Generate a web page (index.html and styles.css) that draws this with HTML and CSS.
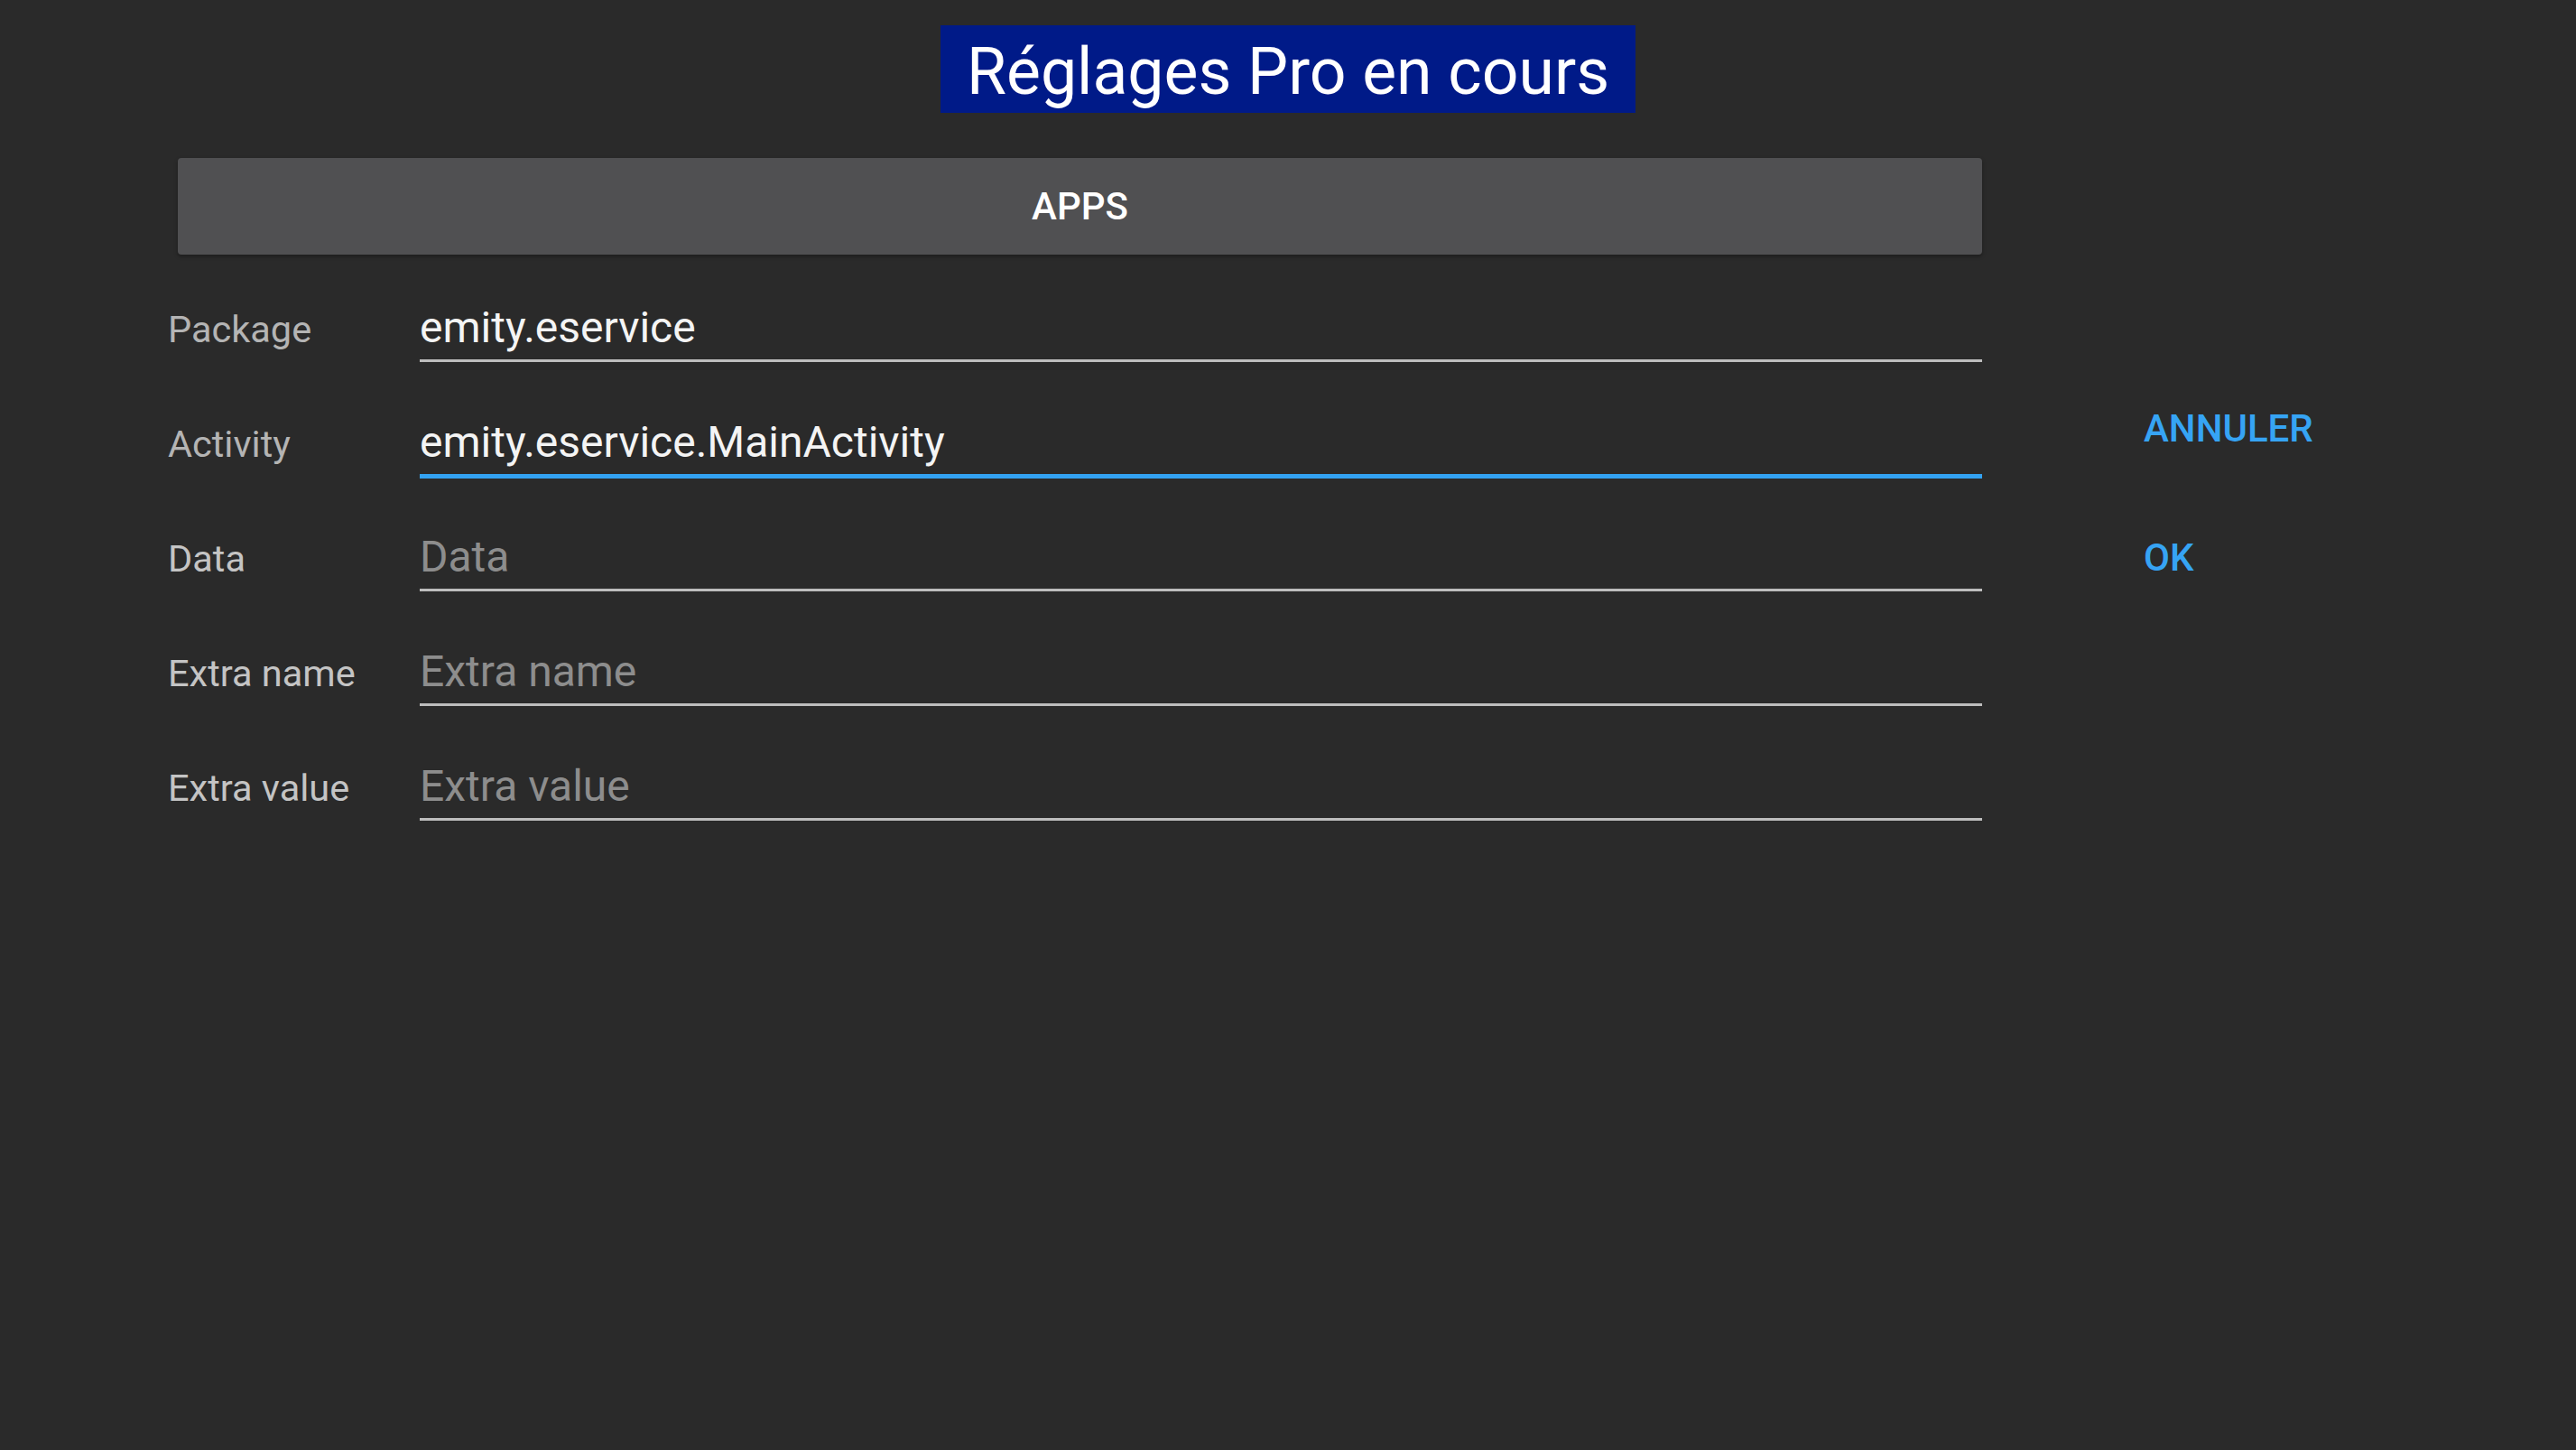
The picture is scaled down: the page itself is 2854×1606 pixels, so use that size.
FILE: index.html
```html
<!DOCTYPE html>
<html lang="fr">
<head>
<meta charset="utf-8">
<title>Réglages Pro en cours</title>
<link rel="stylesheet" href="styles.css">
</head>
<body>
  <header class="title-wrap">
    <h1 class="title">Réglages Pro en cours</h1>
  </header>
  <main class="layout">
    <section class="left">
      <button class="apps-btn">APPS</button>
      <div class="form">
        <div class="row">
          <span class="label">Package</span>
          <div class="field"><span class="value">emity.eservice</span></div>
        </div>
        <div class="row">
          <span class="label">Activity</span>
          <div class="field focused"><span class="value">emity.eservice.MainActivity</span></div>
        </div>
        <div class="row">
          <span class="label bright">Data</span>
          <div class="field"><span class="placeholder">Data</span></div>
        </div>
        <div class="row">
          <span class="label bright">Extra name</span>
          <div class="field"><span class="placeholder">Extra name</span></div>
        </div>
        <div class="row">
          <span class="label bright">Extra value</span>
          <div class="field"><span class="placeholder">Extra value</span></div>
        </div>
      </div>
    </section>
    <aside class="actions">
      <span class="action">ANNULER</span>
      <span class="action">OK</span>
    </aside>
  </main>
</body>
</html>
```
FILE: styles.css
```css
html, body {
  margin: 0;
  padding: 0;
}
body {
  background: #2a2a2a;
  font-family: Roboto, "Noto Sans", sans-serif;
  width: 2854px;
  height: 1606px;
  overflow: hidden;
  padding-top: 28px;
  box-sizing: border-box;
}
.title-wrap {
  display: flex;
  justify-content: center;
}
.title {
  margin: 0;
  background: #001a88;
  color: #ffffff;
  font-weight: 400;
  font-size: 71.5px;
  line-height: 91px;
  padding: 6px 29px 0 29px;
  height: 91px;
  white-space: nowrap;
}
.layout {
  display: flex;
  margin-top: 50px;
  padding-left: 182px;
}
.left {
  width: 2014px;
  display: flex;
  flex-direction: column;
}
.apps-btn {
  margin: 0 0 0 15px;
  width: 1999px;
  height: 107px;
  border: none;
  border-radius: 4px;
  background: #505052;
  color: #ffffff;
  font-family: Roboto, "Noto Sans", sans-serif;
  font-weight: 500;
  font-size: 42px;
  box-shadow: 0 2px 4px rgba(0, 0, 0, 0.35);
  padding: 0;
}
.form {
  margin-top: 53px;
  display: flex;
  flex-direction: column;
  gap: 61px;
}
.row {
  display: flex;
  align-items: baseline;
}
.label {
  width: 279px;
  margin-left: 4px;
  flex: none;
  font-size: 41.5px;
  line-height: 56px;
  color: #b4b4b4;
}
.label.bright {
  color: #c4c4c4;
}
.field {
  width: 1731px;
  font-size: 48px;
  line-height: 56px;
  padding-bottom: 7px;
  border-bottom: 3px solid #bdbdbd;
  white-space: nowrap;
}
.field.focused {
  padding-bottom: 7px;
  margin-bottom: -2px;
  border-bottom: 5px solid #33a2f2;
}
.value {
  color: #f4f4f4;
}
.placeholder {
  color: #8d8d8d;
}
.actions {
  display: flex;
  flex-direction: column;
  align-items: flex-start;
  margin-left: 179px;
  padding-top: 275px;
  gap: 93px;
}
.action {
  font-size: 42px;
  line-height: 50px;
  font-weight: 500;
  color: #36a4f4;
}
```
